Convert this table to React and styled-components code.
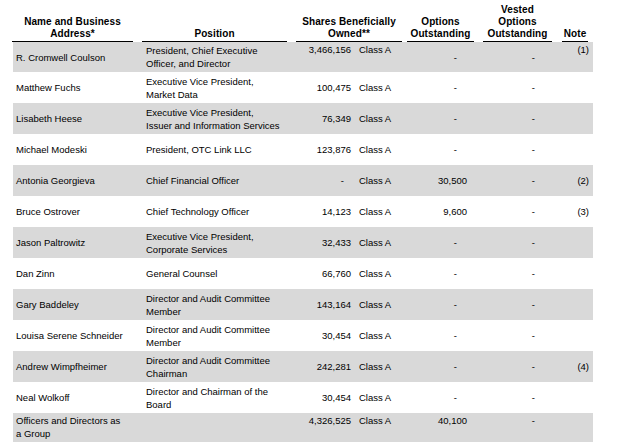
import React from "react";
import styled, { createGlobalStyle, css } from "styled-components";

const GlobalStyle = createGlobalStyle`
  body {
    margin: 0;
    background: #fff;
    font-family: "Liberation Sans", Arial, sans-serif;
    color: #000;
  }
`;

const holders = [
  {
    name: ["R. Cromwell Coulson"],
    position: ["President, Chief Executive", "Officer, and Director"],
    shares: "3,466,156",
    options: "-",
    note: "(1)",
    top: ["shares", "note"]
  },
  {
    name: ["Matthew Fuchs"],
    position: ["Executive Vice President,", "Market Data"],
    shares: "100,475",
    options: "-"
  },
  {
    name: ["Lisabeth Heese"],
    position: ["Executive Vice President,", "Issuer and Information Services"],
    shares: "76,349",
    options: "-"
  },
  {
    name: ["Michael Modeski"],
    position: ["President, OTC Link LLC"],
    shares: "123,876",
    options: "-"
  },
  {
    name: ["Antonia Georgieva"],
    position: ["Chief Financial Officer"],
    shares: "-",
    options: "30,500",
    note: "(2)"
  },
  {
    name: ["Bruce Ostrover"],
    position: ["Chief Technology Officer"],
    shares: "14,123",
    options: "9,600",
    note: "(3)"
  },
  {
    name: ["Jason Paltrowitz"],
    position: ["Executive Vice President,", "Corporate Services"],
    shares: "32,433",
    options: "-"
  },
  {
    name: ["Dan Zinn"],
    position: ["General Counsel"],
    shares: "66,760",
    options: "-"
  },
  {
    name: ["Gary Baddeley"],
    position: ["Director and Audit Committee", "Member"],
    shares: "143,164",
    options: "-"
  },
  {
    name: ["Louisa Serene Schneider"],
    position: ["Director and Audit Committee", "Member"],
    shares: "30,454",
    options: "-"
  },
  {
    name: ["Andrew Wimpfheimer"],
    position: ["Director and Audit Committee", "Chairman"],
    shares: "242,281",
    options: "-",
    note: "(4)"
  },
  {
    name: ["Neal Wolkoff"],
    position: ["Director and Chairman of the", "Board"],
    shares: "30,454",
    options: "-"
  },
  {
    name: ["Officers and Directors as", "a Group"],
    position: [],
    shares: "4,326,525",
    options: "40,100",
    allTop: true
  }
];

const Lines = ({ lines }) =>
  lines.map((line, idx) => (
    <React.Fragment key={idx}>
      {idx > 0 && <br />}
      {line}
    </React.Fragment>
  ));

const App = () => {
  return (
    <>
      <GlobalStyle />
      <Table>
        <colgroup>
          <col style={{ width: 125 }} />
          <col style={{ width: 154 }} />
          <col style={{ width: 62 }} />
          <col style={{ width: 51 }} />
          <col style={{ width: 73 }} />
          <col style={{ width: 79 }} />
          <col style={{ width: 36 }} />
        </colgroup>
        <thead>
          <tr>
            <HeadCell>
              <HeadLabel left={-1} right={5}>
                Name and Business
                <br />
                Address*
              </HeadLabel>
            </HeadCell>
            <HeadCell>
              <HeadLabel left={4} right={5}>
                Position
              </HeadLabel>
            </HeadCell>
            <HeadCell colSpan={2}>
              <HeadLabel left={4} right={3}>
                Shares Beneficially
                <br />
                Owned**
              </HeadLabel>
            </HeadCell>
            <HeadCell>
              <HeadLabel left={2} right={4}>
                Options
                <br />
                Outstanding
              </HeadLabel>
            </HeadCell>
            <HeadCell>
              <HeadLabel left={5} right={5}>
                Vested
                <br />
                Options
                <br />
                Outstanding
              </HeadLabel>
            </HeadCell>
            <HeadCell>
              <HeadLabel left={5} right={5}>
                Note
              </HeadLabel>
            </HeadCell>
          </tr>
        </thead>
        <tbody>
          {holders.map((row, idx) => {
            const isTop = field => row.allTop || (row.top || []).includes(field);
            const height = idx === 0 ? 30 : idx === holders.length - 1 ? 29 : 31;
            return (
              <Row key={idx} shaded={idx % 2 === 0} height={height}>
                <NameCell top={row.allTop}>
                  <Lines lines={row.name} />
                </NameCell>
                <PositionCell top={row.allTop}>
                  <Lines lines={row.position} />
                </PositionCell>
                <NumberCell top={isTop("shares")} pad={row.shares === "-" ? 10 : 3}>
                  {row.shares}
                </NumberCell>
                <ClassCell top={isTop("shares")}>Class A</ClassCell>
                <NumberCell top={isTop("options")} pad={row.options === "-" ? 21 : 11}>
                  {row.options}
                </NumberCell>
                <NumberCell top={isTop("vested")} pad={22}>
                  -
                </NumberCell>
                <NumberCell top={isTop("note")} pad={4}>
                  {row.note}
                </NumberCell>
              </Row>
            );
          })}
        </tbody>
      </Table>
    </>
  );
};

const Table = styled.table`
  margin-left: 13px;
  width: 580px;
  table-layout: fixed;
  border-collapse: collapse;
  border-spacing: 0;
`;

const HeadCell = styled.th`
  height: 42px;
  padding: 0;
  vertical-align: bottom;
  text-align: center;
  font-size: 10px;
  font-weight: bold;
  line-height: 12px;
  letter-spacing: 0.1px;
`;

const HeadLabel = styled.div`
  margin: 0 ${p => p.right}px 0 ${p => p.left}px;
  padding-bottom: 1px;
  border-bottom: 1px solid #000;
  white-space: nowrap;
`;

const Row = styled.tr`
  height: ${p => p.height}px;
  background: ${p => (p.shaded ? "#d9d9d9" : "#fff")};
`;

const cellBase = css`
  padding: 1px 0;
  font-size: 9.5px;
  line-height: 13px;
  white-space: nowrap;
  vertical-align: ${p => (p.top ? "top" : "middle")};
`;

const NameCell = styled.td`
  ${cellBase};
  padding-left: 3px;
`;

const PositionCell = styled.td`
  ${cellBase};
  padding-left: 8px;
`;

const NumberCell = styled.td`
  ${cellBase};
  text-align: right;
  padding-right: ${p => p.pad}px;
`;

const ClassCell = styled.td`
  ${cellBase};
  padding-left: 5px;
`;

export default App;
